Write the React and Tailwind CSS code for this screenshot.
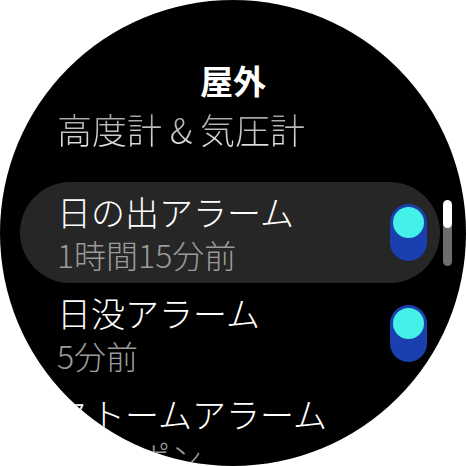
import React from 'react';

const font = { fontFamily: '"Noto Sans CJK JP", "Noto Sans", sans-serif' };

const Toggle = () => (
    <div className="w-[37px] h-[57px] rounded-full bg-[#1a3fae] p-[3px] flex flex-col">
        <div className="w-[31px] h-[31px] rounded-full bg-[#44f1e8]" />
    </div>
);

const Row = ({ title, sub, active }) => (
    <div className={`h-[101px] flex items-center pl-[37px] pr-[13px] rounded-full ${active ? 'bg-[#262626]' : ''}`}>
        <div className="flex-1 flex flex-col gap-[4px] whitespace-nowrap font-light">
            <div className="text-[34px] leading-[38px] text-white">{title}</div>
            <div className="text-[32px] leading-[38px] text-[#9b9b9b]">{sub}</div>
        </div>
        <Toggle />
    </div>
);

const App = () => {
    return (
        <div className="w-[466px] h-[466px] bg-white" style={font}>
            <div className="relative w-[466px] h-[466px] rounded-full bg-black overflow-hidden">
                <div className="pt-[61px] text-center text-[33px] leading-[38px] font-bold text-white">屋外</div>
                <div className="h-[83px] pt-[9px] pl-[57px]">
                    <span className="text-[35px] leading-[42px] font-light bg-gradient-to-b from-[#8a8a8a] to-[#f4f4f4] bg-clip-text text-transparent whitespace-nowrap">
                        高度計 &amp; 気圧計
                    </span>
                </div>
                <div className="ml-[20px] w-[420px] flex flex-col">
                    <Row title="日の出アラーム" sub="1時間15分前" active />
                    <Row title="日没アラーム" sub="5分前" />
                    <Row title="ストームアラーム" sub="1時間ポン" />
                </div>
                <div className="absolute left-[443px] top-[200px] w-[9px] h-[66px] rounded-full bg-[#6e6e6e] overflow-hidden">
                    <div className="h-[28px] rounded-full bg-white" />
                </div>
            </div>
        </div>
    );
};

export default App;
